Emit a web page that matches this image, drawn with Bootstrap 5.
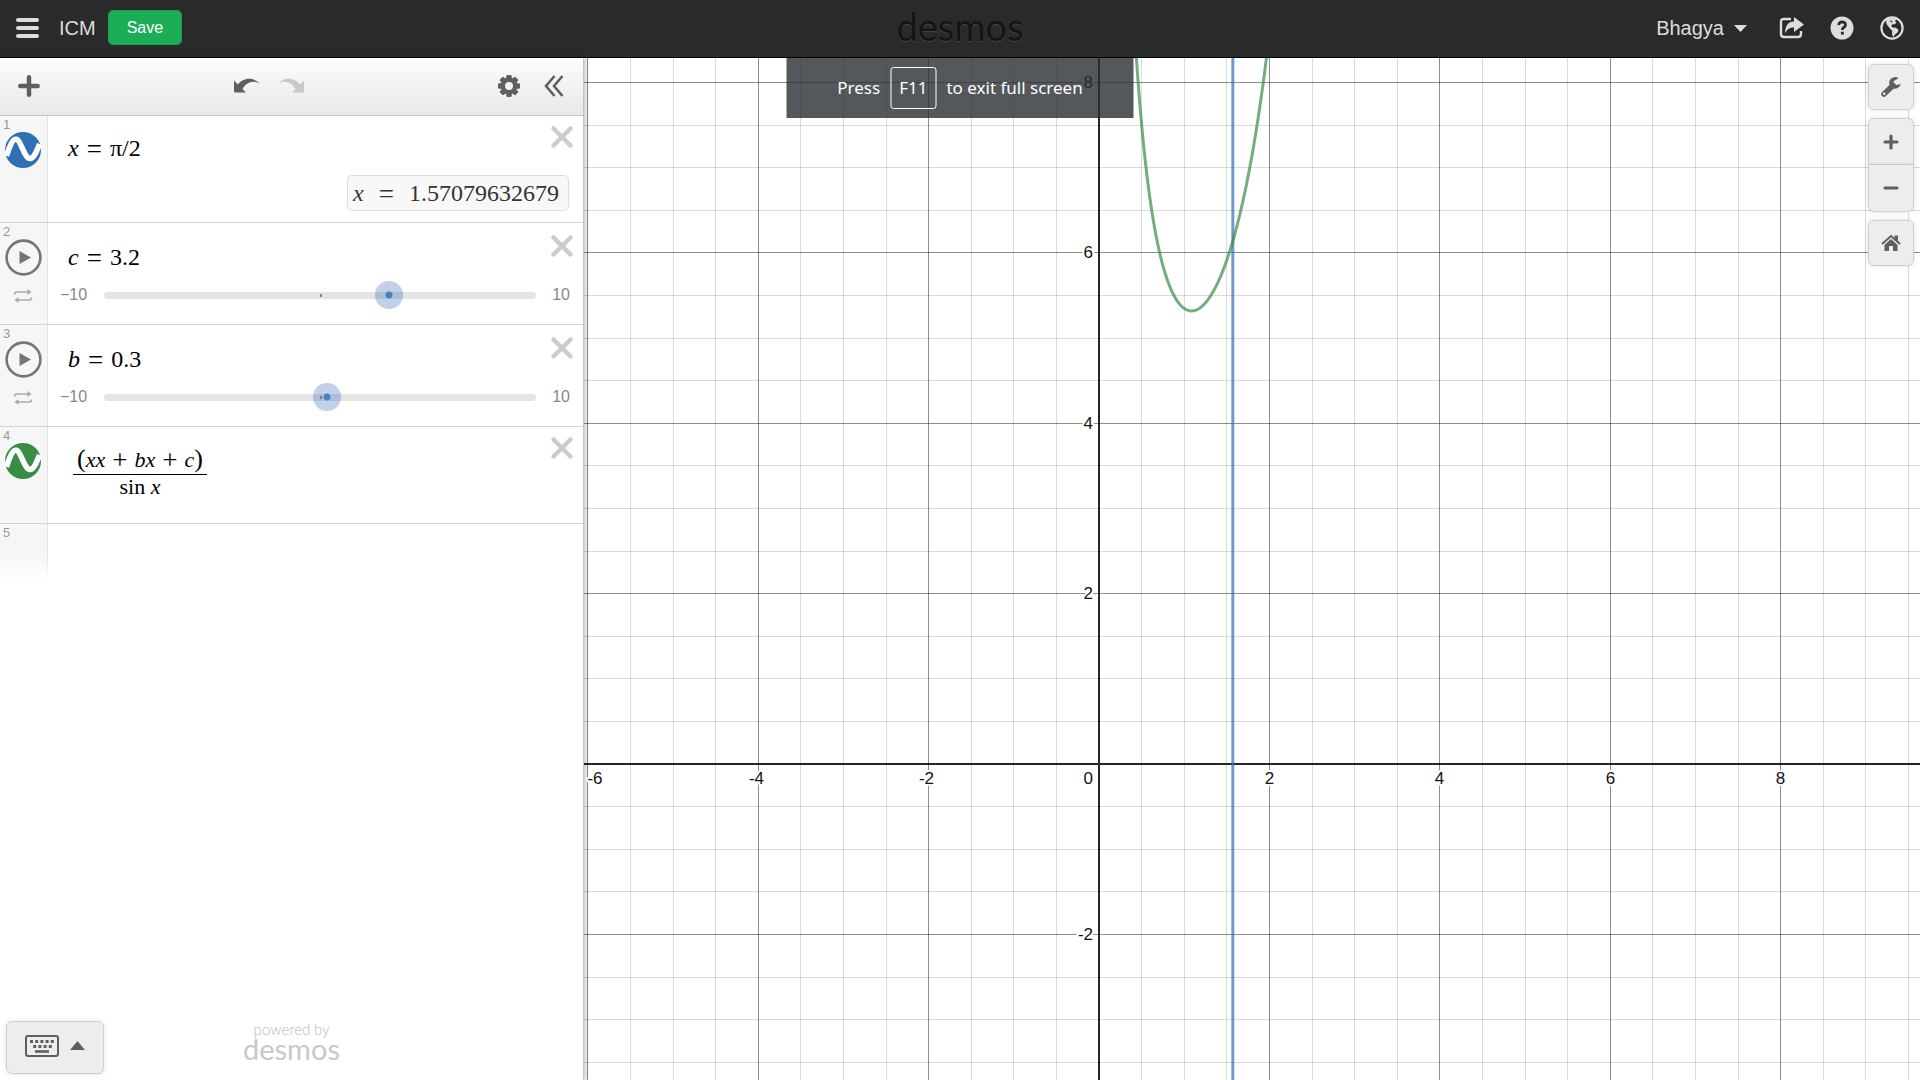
<!DOCTYPE html>
<html lang="en">
<head>
<meta charset="utf-8">
<meta name="viewport" content="width=device-width, initial-scale=1">
<title>ICM | Desmos</title>
<link href="https://cdn.jsdelivr.net/npm/bootstrap@5.3.0/dist/css/bootstrap.min.css" rel="stylesheet">
<style>
  body { font-family: "Liberation Sans", Arial, sans-serif; background: #fff; overflow: hidden; }
  button { background: none; border: 0; padding: 0; color: inherit; }
  svg { display: block; }
  main { min-height: 0; }

  .topbar { display: grid; grid-template-columns: 1fr auto 1fr; height: 58px; padding: 0 16px 2px; background: #2a2a2a; border-bottom: 1px solid #000; color: #ddd; font-size: 20px; line-height: 24px; }
  .doc-title { margin: 0 12px 0 19px; }
  .btn-save { --bs-btn-font-size: 16px; --bs-btn-line-height: 21px; --bs-btn-padding-y: 6px; --bs-btn-padding-x: 18px; --bs-btn-bg: #1cad57; --bs-btn-border-color: #1a9f50; --bs-btn-border-radius: 5px; --bs-btn-color: #fff; }
  .wordmark { font-family: Lato, sans-serif; font-size: 38px; line-height: 40px; padding-bottom: 4px; color: #141414; text-shadow: 0 1px 1px #444; }
  .account { color: #ddd; text-decoration: none; }
  .top-actions { gap: 26px; }

  .sidebar { width: 584px; z-index: 2; background: #fff; border-right: 1px solid #c4c4c4; box-shadow: 2px 0 4px rgba(0,0,0,.22); }
  .toolbar { height: 58px; padding: 0 19px 1px 18px; color: #5f5f5f; background: linear-gradient(#fcfcfc, #e8e8e8); border-bottom: 1px solid #c6c6c6; }
  .history { gap: 18px; }

  .expr { border-bottom: 1px solid #d3d3d3; }
  .gutter { width: 48px; flex: none; padding-top: 1px; padding-right: 1px; background: #f6f6f6; border-right: 1px solid #e3e3e3; color: #757575; }
  .gutter .idx { height: 15px; padding-left: 3px; font-size: 13px; line-height: 15px; color: #999; }
  .gutter button, .gutter svg { margin-left: auto; margin-right: auto; display: block; }
  .gutter .loop { margin-top: 12px; color: #aaa; }
  .body-cell { padding: 18px 14px 11px 20px; }
  .formula { font: 24px/28px "Liberation Serif", "Times New Roman", serif; color: #000; }
  .formula .op { margin: 0 8px; font-size: 27px; line-height: 20px; vertical-align: -2px; }
  .close-x { color: #ccc; height: 22px; margin-top: -9px; margin-right: -5px; }
  .chip { padding: 3px 9px 3px 5px; margin-top: 13px; background: #f8f8f8; border: 1px solid #ddd; border-radius: 5px; color: #333; }
  .chip .op { margin: 0 15px; }
  .sliderline { font-size: 16px; line-height: 20px; color: #888; margin-top: 14px; }
  .sliderline label { width: 44px; }
  .body-slider { padding: 20px 13px 19px 12px; }
  .body-slider .close-x { margin-right: -4px; }
  .body-slider .formula { padding-left: 8px; }
  .track { position: relative; height: 7px; border-radius: 4px; background: #e4e4e4; }
  .track::after { content: ""; position: absolute; left: 50%; top: 2px; width: 2px; height: 3px; background: #888; }
  .track input { position: absolute; z-index: 1; left: -14px; top: -11px; width: calc(100% + 28px); height: 28px; margin: 0; background: none; -webkit-appearance: none; appearance: none; }
  .track input::-webkit-slider-runnable-track { height: 28px; background: none; }
  .track input::-webkit-slider-thumb { -webkit-appearance: none; width: 28px; height: 28px; margin: 0; border: 0; border-radius: 50%; box-shadow: none;
    background: radial-gradient(circle, #4a7fc1 3px, rgba(45,103,179,.3) 4px); }

  .frac { font-size: 22px; line-height: 24px; color: #000; margin-top: 2px; margin-left: 5px; }
  .frac .num { border-bottom: 1px solid #000; padding: 0 4px 2px; }
  .frac .op { margin: 0 7px; }
  .frac .paren { font-size: 26px; line-height: 24px; }
  .last-row { height: 57px; }
  .last-row .gutter { -webkit-mask-image: linear-gradient(#000 55%, transparent); mask-image: linear-gradient(#000 55%, transparent); }

  .footer-bar { display: grid; grid-template-columns: 1fr auto 1fr; padding: 0 6px 6px; }
  .soft-btn { background: #ededed; border: 1px solid #d0d0d0; border-radius: 6px; color: #5f5f5f; box-shadow: 0 0 5px rgba(0,0,0,.12); display: flex; align-items: center; justify-content: center; }
  .keypad { width: 98px; height: 53px; gap: 11px; padding-bottom: 4px; }
  .powered { color: #c8c8c8; font: 300 15px/16px Roboto, sans-serif; text-align: center; padding-bottom: 14px; }
  .powered .wordmark-sm { font: 29px/22px Lato, sans-serif; }

  .graph { z-index: 1; overflow: hidden; }
  #plot { width: 100%; height: 100%; font: 17px "Liberation Sans", Arial, sans-serif; }
  .side-tools { position: absolute; top: 6px; right: 6px; width: 46px; gap: 8px; }
  .side-tools .soft-btn { height: 46px; width: 46px; }
  .side-tools .zoom-in { border-radius: 6px 6px 0 0; height: 47px; }
  .side-tools .zoom-out { border-radius: 0 0 6px 6px; border-top: 0; height: 47px; }

  .fs-note { position: absolute; z-index: 5; left: 50%; top: 58px; transform: translateX(-50%); width: 347px; height: 60px; background: rgba(41,46,51,.8); color: #fff; font: 17px/24px "Noto Sans", "Open Sans", sans-serif; gap: 10px; }
  .fs-note .keycap { border: 1px solid #fff; border-radius: 3px; padding: 8px; }
</style>
</head>
<body class="vh-100 d-flex flex-column">
<header class="topbar align-items-center flex-shrink-0">
  <div class="d-flex align-items-center">
    <button aria-label="Open menu"><svg width="24" height="22" viewBox="0 0 24 22" fill="#ddd"><rect y="1" width="23" height="4" rx="2"/><rect y="9" width="23" height="4" rx="2"/><rect y="17" width="23" height="4" rx="2"/></svg></button>
    <span class="doc-title">ICM</span>
    <button class="btn btn-save">Save</button>
  </div>
  <div class="wordmark">desmos</div>
  <div class="top-actions d-flex align-items-center justify-content-end">
    <a href="#" class="account d-flex align-items-center">Bhagya <svg class="ms-2 me-1" width="17" height="8" viewBox="0 0 17 8" fill="#ddd"><path d="M2 1h13l-6 6.400q-.5.500-1 0z"/></svg></a>
    <button aria-label="Share"><svg width="25" height="24" viewBox="0 0 25 24" fill="none"><path d="M12 3H5Q2 3 2 6v12q0 3 3 3h14q3 0 3-3v-3" stroke="#ddd" stroke-width="2.400"/><path d="M15 1l10 7.500L15 16v-4.500c-4 0-7 1.500-9 6C6 10 9 5.500 15 5.500z" fill="#ddd"/></svg></button>
    <button aria-label="Help"><svg width="24" height="24" viewBox="0 0 24 24"><circle cx="12" cy="12" r="11.500" fill="#ddd"/><path d="M8.700 9.200q.3-3.400 3.500-3.400 3.300.2 3.300 3 0 1.700-1.700 2.700-1.500.9-1.500 2.500" fill="none" stroke="#2a2a2a" stroke-width="2.700"/><rect x="10.900" y="15.700" width="2.900" height="2.900" fill="#2a2a2a"/></svg></button>
    <button aria-label="Language"><svg width="24" height="24" viewBox="0 0 24 24"><circle cx="12" cy="12" r="10.600" fill="none" stroke="#ddd" stroke-width="2.200"/><path d="M6 4L11 2l5.500 1-1.500 2 1.500 1.500-2 2-1.800-.5-1.500 2 1.500 1.500 3.300.3 2.500 2.200-1 2.500-2.500 2L13.500 21l-1.500-2.500.3-3.500-2.800-3L6.500 8z" fill="#ddd"/><path d="M9.500 4.500l3 .5-1 1.700z" fill="#2a2a2a"/></svg></button>
  </div>
</header>

<main class="flex-grow-1 d-flex">
  <section class="sidebar d-flex flex-column flex-shrink-0 position-relative">
    <div class="toolbar d-flex align-items-center justify-content-between">
      <button aria-label="Add item"><svg width="22" height="22" viewBox="0 0 22 22" stroke="currentColor" stroke-width="4.500" stroke-linecap="round"><path d="M11 2.300v17.400M2.300 11h17.400"/></svg></button>
      <div class="history d-flex">
        <button aria-label="Undo"><svg width="27" height="18" viewBox="0 0 27 18" fill="currentColor"><path d="M1 3.500L5 7.500C9 1.500 20-1 26.500 6.500 20 2.500 13 5.500 9.500 12l3.500 3.500H2q-1 0-1-1z"/></svg></button>
        <button aria-label="Redo"><svg width="27" height="18" viewBox="0 0 27 18" fill="#c9c9c9"><path d="M26 3.500L22 7.500C18 1.500 7-1 .5 6.500 7 2.500 14 5.500 17.500 12L14 15.500h11q1 0 1-1z"/></svg></button>
      </div>
      <div class="d-flex gap-4">
        <button aria-label="Graph settings"><svg width="22" height="22" viewBox="-11 -11 22 22"><g fill="currentColor"><g id="tooth"><rect x="-2.700" y="-11" width="5.400" height="22" rx="1.200"/><rect x="-11" y="-2.700" width="22" height="5.400" rx="1.200"/></g><use href="#tooth" transform="rotate(45)"/><circle r="8.400"/></g><circle r="4" fill="#f2f2f2"/></svg></button>
        <button aria-label="Hide expression list"><svg width="20" height="22" viewBox="0 0 20 22" fill="none" stroke="currentColor" stroke-width="2.600"><path d="M10.500 1L2 11l8.500 10M18.500 1L10 11l8.500 10"/></svg></button>
      </div>
    </div>

    <div class="expr d-flex">
      <div class="gutter"><div class="idx">1</div>
        <button aria-label="Hide expression 1"><svg width="36" height="36" viewBox="0 0 36 36"><circle cx="18" cy="18" r="18" fill="#2d70b3"/><path d="M1.500 24C5 13 8 6.500 11.500 7.200 16 8 19 26 25 26.500c4 0 6.500-7 9.500-14.500" fill="none" stroke="#fff" stroke-width="5.500"/></svg></button></div>
      <div class="body-cell flex-grow-1">
        <div class="d-flex justify-content-between align-items-start">
          <div class="formula"><i>x</i><span class="op">=</span>π/2</div>
          <button class="close-x" aria-label="Delete expression 1"><svg width="24" height="24" viewBox="0 0 24 24" stroke="currentColor" stroke-width="4.500" stroke-linecap="round"><path d="M3.500 3.500l17 17M20.500 3.500l-17 17"/></svg></button>
        </div>
        <div class="d-flex justify-content-end"><div class="formula chip"><i>x</i><span class="op">=</span>1.57079632679</div></div>
      </div>
    </div>

    <div class="expr d-flex">
      <div class="gutter"><div class="idx">2</div>
        <button aria-label="Play c"><svg width="37" height="37" viewBox="0 0 37 37"><circle cx="18.500" cy="18.500" r="16.900" fill="none" stroke="currentColor" stroke-width="2.600"/><path d="M14.500 12v13L26 18.500z" fill="currentColor"/></svg></button>
        <button class="loop" aria-label="Loop mode"><svg width="20" height="16" viewBox="0 0 20 16" fill="none" stroke="currentColor" stroke-width="1.700"><path d="M1.500 6.500Q1.500 4 4 4h12M18.500 9.500q0 2.500-2.500 2.500H4"/><path d="M14.500 1l4 3-4 3zM5.500 9l-4 3 4 3z" fill="currentColor" stroke="none"/></svg></button></div>
      <div class="body-slider flex-grow-1">
        <div class="d-flex justify-content-between align-items-start">
          <div class="formula"><i>c</i><span class="op">=</span>3.2</div>
          <button class="close-x" aria-label="Delete expression 2"><svg width="24" height="24" viewBox="0 0 24 24" stroke="currentColor" stroke-width="4.500" stroke-linecap="round"><path d="M3.500 3.500l17 17M20.500 3.500l-17 17"/></svg></button>
        </div>
        <div class="sliderline d-flex align-items-center"><label for="sl-c">−10</label><div class="track flex-grow-1"><input id="sl-c" type="range" min="-10" max="10" step="0.1" value="3.2"></div><span class="ms-3">10</span></div>
      </div>
    </div>

    <div class="expr d-flex">
      <div class="gutter"><div class="idx">3</div>
        <button aria-label="Play b"><svg width="37" height="37" viewBox="0 0 37 37"><circle cx="18.500" cy="18.500" r="16.900" fill="none" stroke="currentColor" stroke-width="2.600"/><path d="M14.500 12v13L26 18.500z" fill="currentColor"/></svg></button>
        <button class="loop" aria-label="Loop mode"><svg width="20" height="16" viewBox="0 0 20 16" fill="none" stroke="currentColor" stroke-width="1.700"><path d="M1.500 6.500Q1.500 4 4 4h12M18.500 9.500q0 2.500-2.500 2.500H4"/><path d="M14.500 1l4 3-4 3zM5.500 9l-4 3 4 3z" fill="currentColor" stroke="none"/></svg></button></div>
      <div class="body-slider flex-grow-1">
        <div class="d-flex justify-content-between align-items-start">
          <div class="formula"><i>b</i><span class="op">=</span>0.3</div>
          <button class="close-x" aria-label="Delete expression 3"><svg width="24" height="24" viewBox="0 0 24 24" stroke="currentColor" stroke-width="4.500" stroke-linecap="round"><path d="M3.500 3.500l17 17M20.500 3.500l-17 17"/></svg></button>
        </div>
        <div class="sliderline d-flex align-items-center"><label for="sl-b">−10</label><div class="track flex-grow-1"><input id="sl-b" type="range" min="-10" max="10" step="0.1" value="0.3"></div><span class="ms-3">10</span></div>
      </div>
    </div>

    <div class="expr d-flex">
      <div class="gutter"><div class="idx">4</div>
        <button aria-label="Hide expression 4"><svg width="36" height="36" viewBox="0 0 36 36"><circle cx="18" cy="18" r="18" fill="#388c46"/><path d="M1.500 24C5 13 8 6.500 11.500 7.200 16 8 19 26 25 26.500c4 0 6.500-7 9.500-14.500" fill="none" stroke="#fff" stroke-width="5.500"/></svg></button></div>
      <div class="body-cell d-flex justify-content-between align-items-start flex-grow-1 pb-4">
        <div class="formula frac text-center">
          <div class="num"><span class="paren">(</span><i>xx</i><span class="op">+</span><i>bx</i><span class="op">+</span><i>c</i><span class="paren">)</span></div>
          <div>sin <i>x</i></div>
        </div>
        <button class="close-x" aria-label="Delete expression 4"><svg width="24" height="24" viewBox="0 0 24 24" stroke="currentColor" stroke-width="4.500" stroke-linecap="round"><path d="M3.500 3.500l17 17M20.500 3.500l-17 17"/></svg></button>
      </div>
    </div>

    <div class="last-row d-flex"><div class="gutter"><div class="idx">5</div></div></div>

    <div class="footer-bar mt-auto align-items-end">
      <button class="soft-btn keypad" aria-label="Show keypad">
        <svg width="34" height="22" viewBox="0 0 34 22"><rect x="1" y="1" width="32" height="20" rx="2" fill="none" stroke="currentColor" stroke-width="2"/><path d="M5 6.500h24" stroke="currentColor" stroke-width="3" stroke-dasharray="3 2.200"/><path d="M8.200 11.500h19" stroke="currentColor" stroke-width="3" stroke-dasharray="3 2.200"/><path d="M10 16.500h14" stroke="currentColor" stroke-width="2.600"/></svg>
        <svg width="15" height="9" viewBox="0 0 15 9" fill="currentColor"><path d="M0 9L7.500 0 15 9z"/></svg>
      </button>
      <div class="powered"><div>powered by</div><div class="wordmark-sm">desmos</div></div>
    </div>
  </section>

  <section class="graph flex-grow-1 position-relative">
    <svg id="plot" role="img" aria-label="Graph paper"></svg>
    <div class="side-tools d-flex flex-column">
      <button class="soft-btn" aria-label="Graph settings"><svg width="20" height="20" viewBox="0 0 20 20"><path d="M3 17L12 8.500" stroke="currentColor" stroke-width="5.500" stroke-linecap="round"/><path d="M17.500 1.200A5.800 5.800 0 1 0 19.700 7L15.500 8 12.700 7l-.2-2.800z" fill="currentColor"/><circle cx="3.200" cy="16.800" r="1.300" fill="#ededed"/></svg></button>
      <div>
        <button class="soft-btn zoom-in" aria-label="Zoom in"><svg width="16" height="16" viewBox="0 0 16 16" stroke="currentColor" stroke-width="3.200" stroke-linecap="round"><path d="M8 2v12M2 8h12"/></svg></button>
        <button class="soft-btn zoom-out" aria-label="Zoom out"><svg width="16" height="16" viewBox="0 0 16 16" stroke="currentColor" stroke-width="3.200" stroke-linecap="round"><path d="M2 8h12"/></svg></button>
      </div>
      <button class="soft-btn" aria-label="Default viewport"><svg width="20" height="18" viewBox="0 0 20 18"><path d="M1 10l9-8 9 8" fill="none" stroke="currentColor" stroke-width="2"/><path d="M13.500 1.500H17V8l-3.500-3zM10 5l6.500 6v6H12v-5H8v5H3.500v-6z" fill="currentColor"/></svg></button>
    </div>
  </section>
</main>

<div class="fs-note d-flex align-items-center justify-content-center" role="status"><span>Press</span><span class="keycap">F11</span><span>to exit full screen</span></div>

<script src="https://cdn.jsdelivr.net/npm/bootstrap@5.3.0/dist/js/bootstrap.bundle.min.js"></script>
<script>
  // Graph paper: origin and scale in pixels of the plot area.
  const plot = document.getElementById('plot');
  const OX = 515, OY = 706, UNIT = 85.2;
  function draw() {
    const w = plot.clientWidth, h = plot.clientHeight;
    const sx = x => OX + x * UNIT, sy = y => OY - y * UNIT;
    const snap = v => Math.floor(v) + 0.5;
    let grid = '', major = '', labels = '';
    for (let i = Math.ceil(-OX / UNIT * 2); sx(i / 2) < w; i++) {
      const p = snap(sx(i / 2)), v = i / 2, d = `M${p} 0V${h}`;
      if (i % 4) { grid += d; continue; }
      if (!v) continue;
      major += d;
      labels += `<text x="${Math.max(p - (v < 0 ? 2 : 0), 11)}" y="${OY + 20}" text-anchor="middle">${v}</text>`;
    }
    for (let i = Math.ceil((OY - h) / UNIT * 2); sy(i / 2) > 0; i++) {
      const p = snap(sy(i / 2)), v = i / 2, d = `M0 ${p}H${w}`;
      if (i % 4) { grid += d; continue; }
      if (!v) continue;
      major += d;
      labels += `<text x="${OX - 6}" y="${p + 5}" text-anchor="end">${v}</text>`;
    }
    labels += `<text x="${OX - 6}" y="${OY + 20}" text-anchor="end">0</text>`;
    const c = 3.2, b = 0.3;
    let curve = '';
    for (let x = 0.3; x < 2.3; x += 0.01) {
      const y = (x * x + b * x + c) / Math.sin(x);
      if (sy(y) > -40) curve += `${curve ? 'L' : 'M'}${sx(x).toFixed(2)} ${sy(y).toFixed(2)}`;
    }
    plot.innerHTML = `<path d="${grid}" stroke="#000" stroke-opacity=".14" fill="none"/>
      <path d="${major}" stroke="#000" stroke-opacity=".45" fill="none"/>
      <path d="M${OX} 0V${h}M0 ${OY}H${w}" stroke="#000" stroke-opacity=".85" stroke-width="2"/>
      <g fill="#111" stroke="#fff" stroke-width="4" stroke-linejoin="round" paint-order="stroke">${labels}</g>
      <path d="M${sx(Math.PI / 2)} 0V${h}" stroke="#2d70b3" stroke-opacity=".7" stroke-width="3"/>
      <path d="${curve}" stroke="#388c46" stroke-opacity=".7" stroke-width="3" fill="none"/>`;
  }
  draw();
  window.addEventListener('resize', draw);
</script>
</body>
</html>
